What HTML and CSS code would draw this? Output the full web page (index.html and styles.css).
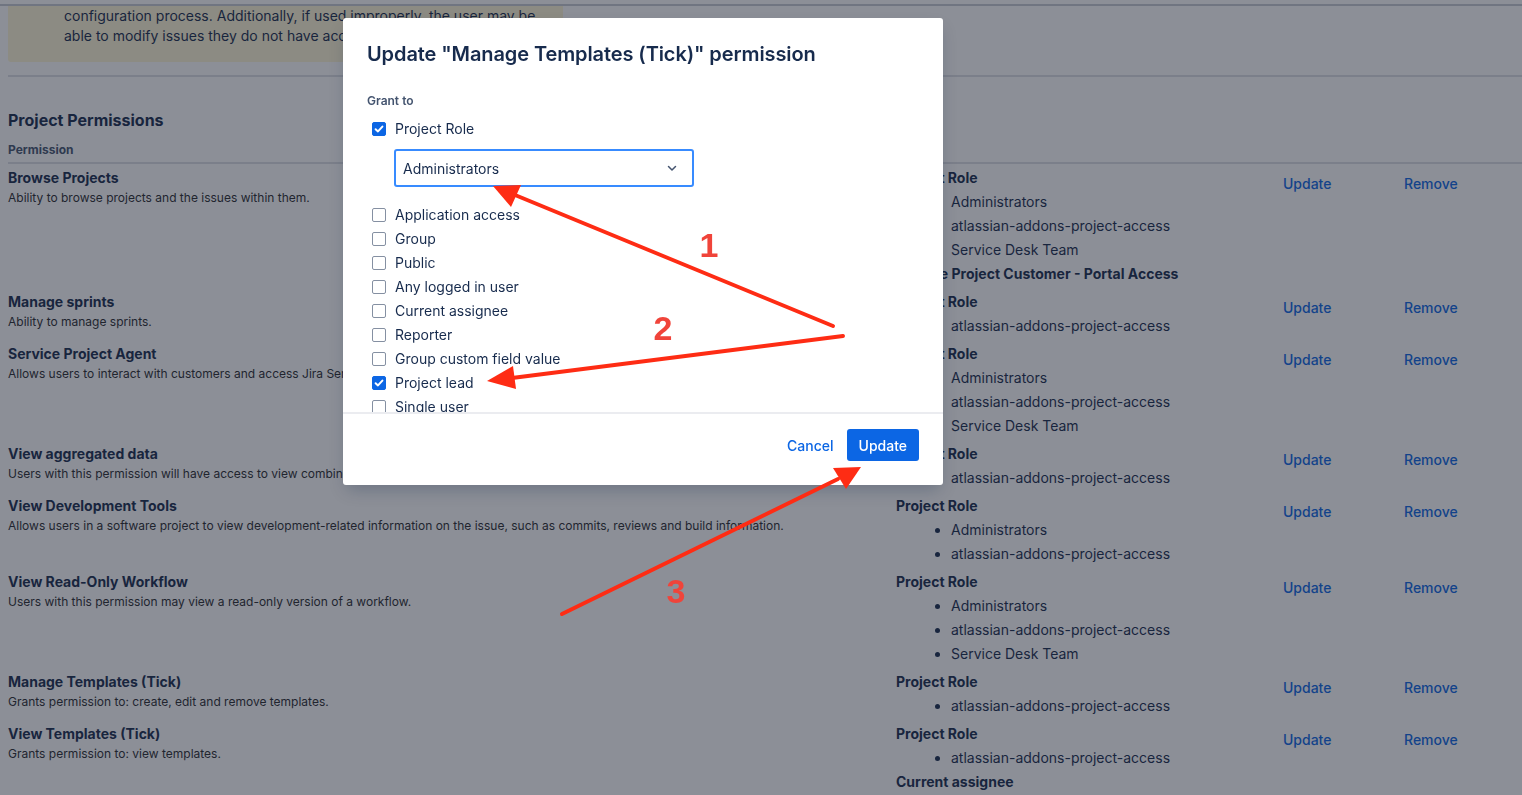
FILE: index.html
```html
<!DOCTYPE html>
<html lang="en">
  <head>
    <meta charset="UTF-8" />
    <title>Permission scheme</title>
    <link rel="stylesheet" href="styles.css">
  </head>
  <body>
    <div class="topbar"></div>
    <main class="page">
      <div class="warning">
        <p>configuration process. Additionally, if used improperly, the user may be<br>able to modify issues they do not have access to.</p>
      </div>
      <hr class="divider">
      <h2 class="section-title">Project Permissions</h2>
      <table class="perm-table">
        <colgroup>
          <col class="col-perm">
          <col class="col-grant">
          <col class="col-update">
          <col class="col-remove">
        </colgroup>
        <thead>
          <tr>
            <th>Permission</th>
            <th class="grant"></th>
            <th></th>
            <th></th>
          </tr>
        </thead>
        <tbody>
          <tr>
            <td>
              <div class="perm-name">Browse Projects</div>
              <div class="perm-desc">Ability to browse projects and the issues within them.</div>
            </td>
            <td class="grant">
              <div class="grant-type">Project Role</div>
              <ul>
                <li>Administrators</li>
                <li>atlassian-addons-project-access</li>
                <li>Service Desk Team</li>
              </ul>
              <div class="grant-type">Service Project Customer - Portal Access</div>
            </td>
            <td class="act"><a href="#">Update</a></td>
            <td class="act"><a href="#">Remove</a></td>
          </tr>
          <tr>
            <td>
              <div class="perm-name">Manage sprints</div>
              <div class="perm-desc">Ability to manage sprints.</div>
            </td>
            <td class="grant">
              <div class="grant-type">Project Role</div>
              <ul>
                <li>atlassian-addons-project-access</li>
              </ul>
            </td>
            <td class="act"><a href="#">Update</a></td>
            <td class="act"><a href="#">Remove</a></td>
          </tr>
          <tr>
            <td>
              <div class="perm-name">Service Project Agent</div>
              <div class="perm-desc">Allows users to interact with customers and access Jira Service Management features of a project.</div>
            </td>
            <td class="grant">
              <div class="grant-type">Project Role</div>
              <ul>
                <li>Administrators</li>
                <li>atlassian-addons-project-access</li>
                <li>Service Desk Team</li>
              </ul>
            </td>
            <td class="act"><a href="#">Update</a></td>
            <td class="act"><a href="#">Remove</a></td>
          </tr>
          <tr>
            <td>
              <div class="perm-name">View aggregated data</div>
              <div class="perm-desc">Users with this permission will have access to view combined and aggregated project data.</div>
            </td>
            <td class="grant">
              <div class="grant-type">Project Role</div>
              <ul>
                <li>atlassian-addons-project-access</li>
              </ul>
            </td>
            <td class="act"><a href="#">Update</a></td>
            <td class="act"><a href="#">Remove</a></td>
          </tr>
          <tr>
            <td>
              <div class="perm-name">View Development Tools</div>
              <div class="perm-desc">Allows users in a software project to view development-related information on the issue, such as commits, reviews and build information.</div>
            </td>
            <td class="grant">
              <div class="grant-type">Project Role</div>
              <ul>
                <li>Administrators</li>
                <li>atlassian-addons-project-access</li>
              </ul>
            </td>
            <td class="act"><a href="#">Update</a></td>
            <td class="act"><a href="#">Remove</a></td>
          </tr>
          <tr>
            <td>
              <div class="perm-name">View Read-Only Workflow</div>
              <div class="perm-desc">Users with this permission may view a read-only version of a workflow.</div>
            </td>
            <td class="grant">
              <div class="grant-type">Project Role</div>
              <ul>
                <li>Administrators</li>
                <li>atlassian-addons-project-access</li>
                <li>Service Desk Team</li>
              </ul>
            </td>
            <td class="act"><a href="#">Update</a></td>
            <td class="act"><a href="#">Remove</a></td>
          </tr>
          <tr>
            <td>
              <div class="perm-name">Manage Templates (Tick)</div>
              <div class="perm-desc">Grants permission to: create, edit and remove templates.</div>
            </td>
            <td class="grant">
              <div class="grant-type">Project Role</div>
              <ul>
                <li>atlassian-addons-project-access</li>
              </ul>
            </td>
            <td class="act"><a href="#">Update</a></td>
            <td class="act"><a href="#">Remove</a></td>
          </tr>
          <tr>
            <td>
              <div class="perm-name">View Templates (Tick)</div>
              <div class="perm-desc">Grants permission to: view templates.</div>
            </td>
            <td class="grant">
              <div class="grant-type">Project Role</div>
              <ul>
                <li>atlassian-addons-project-access</li>
              </ul>
              <div class="grant-type">Current assignee</div>
            </td>
            <td class="act"><a href="#">Update</a></td>
            <td class="act"><a href="#">Remove</a></td>
          </tr>
        </tbody>
      </table>
    </main>

    <div class="blanket"></div>

    <section class="modal" role="dialog">
      <header class="modal-head">
        <h1>Update "Manage Templates (Tick)" permission</h1>
      </header>
      <div class="modal-body">
        <div class="field-label">Grant to</div>
        <div class="check-list">
          <label class="check"><span class="box on"><svg width="14" height="14" viewBox="0 0 14 14"><path d="M3.6 7.2 6 9.4 10.4 4.6" fill="none" stroke="#fff" stroke-width="2" stroke-linecap="round" stroke-linejoin="round"/></svg></span>Project Role</label>
          <div class="select">
            <span>Administrators</span>
            <svg width="12" height="12" viewBox="0 0 12 12"><path d="M2.5 4.5 6 8 9.5 4.5" fill="none" stroke="#44546f" stroke-width="1.5" stroke-linecap="round" stroke-linejoin="round"/></svg>
          </div>
          <label class="check spaced"><span class="box"></span>Application access</label>
          <label class="check"><span class="box"></span>Group</label>
          <label class="check"><span class="box"></span>Public</label>
          <label class="check"><span class="box"></span>Any logged in user</label>
          <label class="check"><span class="box"></span>Current assignee</label>
          <label class="check"><span class="box"></span>Reporter</label>
          <label class="check"><span class="box"></span>Group custom field value</label>
          <label class="check"><span class="box on"><svg width="14" height="14" viewBox="0 0 14 14"><path d="M3.6 7.2 6 9.4 10.4 4.6" fill="none" stroke="#fff" stroke-width="2" stroke-linecap="round" stroke-linejoin="round"/></svg></span>Project lead</label>
          <label class="check"><span class="box"></span>Single user</label>
          <label class="check"><span class="box"></span>User custom field value</label>
          <label class="check"><span class="box"></span>Service Project Customer - Portal Access</label>
        </div>
      </div>
      <footer class="modal-foot">
        <a href="#" class="cancel">Cancel</a>
        <button class="primary">Update</button>
      </footer>
    </section>

    <!-- annotation layer drawn over the screenshot -->
    <svg class="marks" width="1522" height="795" viewBox="0 0 1522 795">
      <g stroke="#fe2c14" stroke-width="4" stroke-linecap="round">
        <line x1="833" y1="326" x2="515" y2="195"/>
        <line x1="843" y1="336" x2="512" y2="378"/>
        <line x1="562" y1="614" x2="838" y2="479"/>
      </g>
      <g fill="#fe2c14">
        <polygon points="493,186 521,185 511,207"/>
        <polygon points="487,381 513,366 516,389"/>
        <polygon points="861,467 833,468 846,489"/>
      </g>
      <g class="mark-num" fill="#f0443a">
        <text x="709" y="257">1</text>
        <text x="663" y="340">2</text>
        <text x="676" y="603">3</text>
      </g>
    </svg>
  </body>
</html>
```

FILE: styles.css
```css
body {
  font-family: Inter, "Noto Sans", sans-serif;
  color: #172b4d;
  background: #fff;
  margin: 0;
  overflow: hidden;
}
.topbar {
  height: 4px;
  border-bottom: 2px solid #c7cbd2;
}
.page {
  padding-left: 8px;
}
.warning {
  width: 555px;
  box-sizing: border-box;
  background: #fff7d6;
  border-radius: 0 0 3px 3px;
  padding: 0 16px 16px 56px;
  font-size: 14px;
  line-height: 20px;
}
.warning p {
  margin: 0;
  white-space: nowrap;
  overflow: hidden;
}
.divider {
  border: none;
  border-top: 2px solid #dcdfe4;
  margin: 13px 0 0;
}
.section-title {
  font-size: 16px;
  line-height: 20px;
  margin: 33px 0 12px;
}
.perm-table {
  width: 1514px;
  table-layout: fixed;
  border-collapse: collapse;
}
.col-perm {
  width: 880px;
}
.col-grant {
  width: 387px;
}
.col-update {
  width: 121px;
}
.perm-table th {
  text-align: left;
  font-size: 12px;
  line-height: 16px;
  color: #44546f;
  padding: 0 0 4px;
  border-bottom: 2px solid #dcdfe4;
}
.perm-table td {
  vertical-align: top;
  padding: 2px 0;
}
.perm-table .grant {
  padding-left: 8px;
}
.perm-table .act {
  padding: 8px 0 0 8px;
  font-size: 14px;
  line-height: 24px;
}
.perm-name {
  font-size: 14px;
  font-weight: 700;
  line-height: 24px;
}
.perm-desc {
  font-size: 12px;
  line-height: 16px;
  color: #292a2e;
}
.grant {
  font-size: 14px;
  line-height: 24px;
}
.grant-type {
  font-weight: 700;
}
.grant ul {
  margin: 0;
  padding-left: 55px;
}
.act a {
  color: #0c66e4;
  text-decoration: none;
  font-weight: 500;
}

.blanket {
  position: fixed;
  inset: 0;
  background: rgba(25, 32, 48, 0.5);
}
.modal {
  position: fixed;
  left: 343px;
  top: 18px;
  width: 600px;
  height: 467px;
  background: #fff;
  border-radius: 3px;
  box-shadow: 0 8px 16px -4px rgba(9, 30, 66, 0.25);
  display: flex;
  flex-direction: column;
}
.modal-head {
  padding: 24px 24px 2px;
}
.modal-head h1 {
  margin: 0;
  font-size: 20px;
  line-height: 24px;
  font-weight: 600;
  letter-spacing: -0.1px;
}
.modal-body {
  flex: 1;
  overflow-y: auto;
  scrollbar-width: none;
  padding: 25px 24px 0;
}
.field-label {
  font-size: 12px;
  font-weight: 600;
  line-height: 16px;
  color: #44546f;
}
.check-list {
  margin-top: 8px;
}
.check {
  display: flex;
  align-items: center;
  font-size: 14px;
  line-height: 24px;
}
.check.spaced {
  margin-top: 16px;
}
.box {
  width: 14px;
  height: 14px;
  box-sizing: border-box;
  margin: 0 9px 0 5px;
  border: 1.5px solid #8590a2;
  border-radius: 2px;
  display: flex;
}
.box.on {
  background: #0c66e4;
  border-color: #0c66e4;
}
.box svg {
  margin: -1.5px;
}
.select {
  width: 300px;
  height: 38px;
  box-sizing: border-box;
  margin: 8px 0 0 27px;
  border: 2px solid #388bff;
  border-radius: 3px;
  padding: 0 14px 0 7px;
  display: flex;
  align-items: center;
  justify-content: space-between;
  font-size: 14px;
}
.modal-foot {
  border-top: 2px solid #ebecf0;
  padding: 15px 24px 24px;
  display: flex;
  justify-content: flex-end;
  align-items: center;
  gap: 13px;
}
.cancel {
  color: #0c66e4;
  text-decoration: none;
  font-size: 14px;
  font-weight: 500;
}
.primary {
  height: 32px;
  padding: 0 12px;
  border: none;
  border-radius: 3px;
  background: #0c66e4;
  color: #fff;
  font-family: inherit;
  font-size: 14px;
  font-weight: 500;
}

.marks {
  position: fixed;
  left: 0;
  top: 0;
  pointer-events: none;
}
.mark-num {
  font-family: "Liberation Sans", sans-serif;
  font-size: 34px;
  font-weight: 700;
  text-anchor: middle;
}
```
